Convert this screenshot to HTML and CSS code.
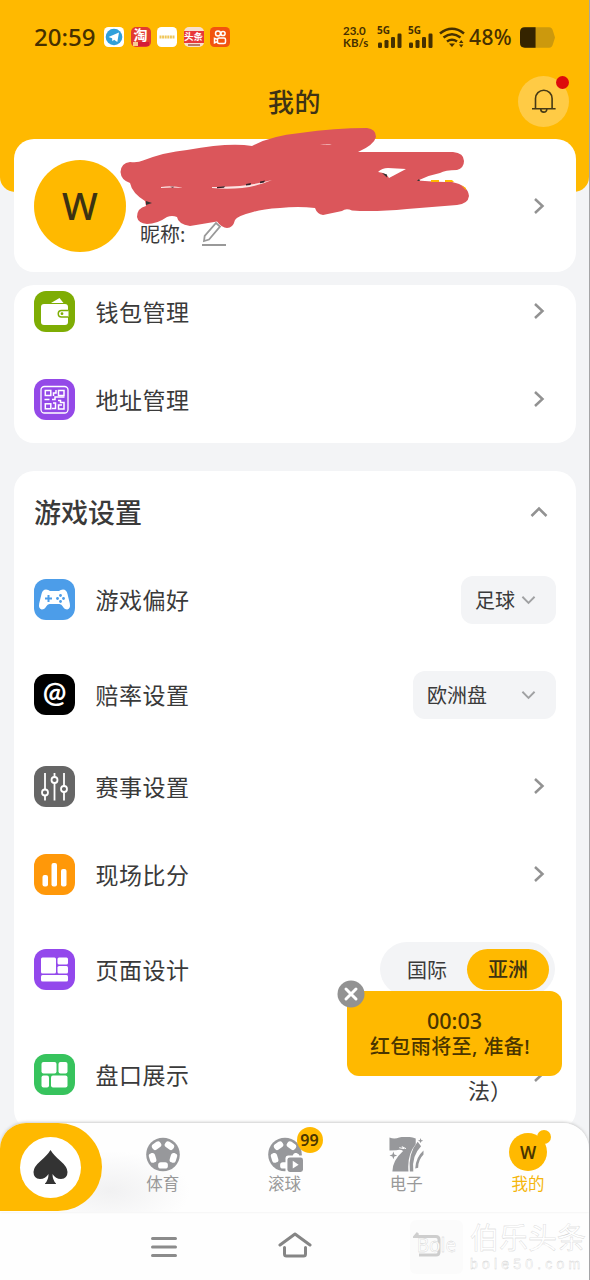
FILE: index.html
```html
<!DOCTYPE html>
<html lang="zh-CN">
<head>
<meta charset="utf-8">
<title>我的</title>
<link rel="stylesheet" href="styles.css">
</head>
<body>
<svg class="defs" width="0" height="0">
  <symbol id="chev" viewBox="0 0 12 18"><path d="M2 2l7.500 7L2 16" fill="none" stroke="#929292" stroke-width="2.500"/></symbol>
  <symbol id="down" viewBox="0 0 16 10"><path d="M1.500 1.500L8 8l6.500-6.500" fill="none" stroke="#a0a1a3" stroke-width="2"/></symbol>
  <symbol id="signal" viewBox="0 0 26 22"><g fill="#463000"><rect x="2" y="16.500" width="4" height="5.500" rx="1.200"/><rect x="8.500" y="14" width="4" height="8" rx="1.200"/><rect x="15" y="11" width="4" height="11" rx="1.200"/><rect x="21.500" y="7.500" width="4" height="14.500" rx="1.200"/></g></symbol>
  <symbol id="ball" viewBox="0 0 36 36"><circle cx="18" cy="18" r="17.300" fill="#97989b"/><g fill="#fff"><rect x="13" y="26" width="10" height="6.500" rx="2.800"/><rect x="13" y="26" width="10" height="6.500" rx="2.800" transform="rotate(72 18 18)"/><rect x="13" y="26" width="10" height="6.500" rx="2.800" transform="rotate(144 18 18)"/><rect x="13" y="26" width="10" height="6.500" rx="2.800" transform="rotate(216 18 18)"/><rect x="13" y="26" width="10" height="6.500" rx="2.800" transform="rotate(288 18 18)"/></g></symbol>
</svg>
<div class="app">
  <header class="header">
    <div class="status">
      <span class="clock">20:59</span>
      <div class="apps">
        <svg viewBox="0 0 20 20"><rect width="20" height="20" rx="4.500" fill="#fff"/><circle cx="10" cy="10" r="8.300" fill="#31a0da"/><path d="M4.500 10L15 5.500 13.300 15l-3.200-2.300-1.700 1.600-.3-3z" fill="#fff"/></svg>
        <span class="app-icon taobao"><b>淘</b><i></i></span>
        <svg viewBox="0 0 20 20"><rect width="20" height="20" rx="4.500" fill="#fff"/><path d="M2.500 10h15" stroke="#efc65a" stroke-width="3" stroke-dasharray="2 .6"/></svg>
        <span class="app-icon toutiao"><b>头条</b><i></i></span>
        <svg viewBox="0 0 20 20"><rect width="20" height="20" rx="4.500" fill="#f2530f"/><g fill="none" stroke="#fff" stroke-width="1.500"><circle cx="8" cy="6.500" r="2.500"/><circle cx="13" cy="6.500" r="2.100"/><rect x="7.500" y="11" width="8" height="5.500" rx="1.500"/><path d="M7 12.300l-2.500-1v4.500l2.500-1"/></g></svg>
      </div>
      <div class="speed"><span>23.0</span><span>KB/s</span></div>
      <div class="cell"><svg><use href="#signal"/></svg><b>5G</b></div>
      <div class="cell second"><svg><use href="#signal"/></svg><b>5G</b></div>
      <svg class="wifi" viewBox="0 0 26 21"><g fill="none" stroke="#463000" stroke-width="2.600"><path d="M1 6.500Q13-3 25 6.500M4.500 10.500q8.500-6.500 17 0M8 14.500q5-3.500 10 0"/></g><path d="M10 16.500h6L13 20z" fill="#463000"/><path d="M20 16l2.200-3 2.200 3zm0 1.500h4.400L22.200 20.500z" fill="#463000"/></svg>
      <span class="percent">48%</span>
      <svg class="battery" viewBox="0 0 36 21"><path d="M5 0h25q3 0 4 4l2 6.500-2 6.500q-1 4-4 4H5q-5 0-5-5V5q0-5 5-5z" fill="#cc990d"/><path d="M16 0H5Q0 0 0 5v11q0 5 5 5h11z" fill="#352400"/></svg>
    </div>
    <div class="titlebar">
      <h1>我的</h1>
      <div class="bell">
        <svg viewBox="0 0 26 26"><path d="M4.500 20.500V10.500a8.300 8.300 0 0 1 16.600 0v10M1 20.700h23.600M9.800 21.500a3 2.600 0 0 0 6 0" fill="none" stroke="#463a16" stroke-width="1.600"/></svg>
        <i></i>
      </div>
    </div>
  </header>

  <section class="card profile">
    <div class="avatar">W</div>
    <div class="nick"><span>昵称:</span>
      <svg viewBox="0 0 25 24"><path d="M3 19l.7-5L15 1l4 3.500L8 17.500zM1 23h24" fill="none" stroke="#999" stroke-width="1.800"/></svg>
    </div>
    <svg class="chev"><use href="#chev"/></svg>
    <svg class="scribble" viewBox="115 125 360 108">
      <path d="M120.500 172Q121 163 130 162Q138 163 143 160.500Q165 152 187 150Q230 142 252 146Q270 136 300 133Q335 128 367 128Q376 129 376 137Q374 145 358 152H453Q464 153 464 161Q464 168 457 170Q445 170 440 173Q429 175 418 180.500Q440 182 452 182Q468 185 469 196Q468 204 457 205L407 209Q375 212 352 210.500Q346 208 342 211L323 215Q317 214 315 208Q298 206 280 208Q262 209 253 212Q237 216 235 220Q233 228 227 228Q222 228 217 221.500L190 226Q178 224 177 217Q172 215 167 217Q157 224 147 224Q138 223 137 217Q137 208 146 206L145 201Q132 193 130 183Q121 180 120.500 172Z" fill="#db565b"/>
      <path d="M378 172Q382 168 388 168L406 169 389 178Q387 173 378 172Z" fill="#fff"/>
      <path d="M382 173l5 1.500v3M417 181l2-2 1 2M146 201l6 2-6 2z" fill="#333"/>
      <path d="M431 180h8v2h-8zM445 180h7l2 2h-9zM461 185l5 3v2" fill="#ffb900"/>
      <path d="M212 187q30 1 60-7-24 11-60 8zM161 187q12-2 22 1-11-1-22 0zM320 145q7-2 12 0-7-1-12 0z" fill="#fce4e4"/>
      <path d="M217 187l8-.8-1 1.500-7 .5zm29-3l5-1-.5 2-4.500.6zm14-2.500l5-1-1 2-4 .7zm-90 5.300h4l-1 1z" fill="#32232a"/>
    </svg>
  </section>

  <section class="card wallet">
    <div class="row h-link">
      <svg class="ico" viewBox="0 0 41 41"><rect width="41" height="41" rx="12" fill="#7ead04"/><path d="M17 12l8.500-5 4 5z" fill="#fff"/><rect x="7" y="13" width="27" height="21" rx="3" fill="#fff"/><path d="M34.500 19.500H27.500a3 3 0 0 0 0 6.500h7" fill="#fff" stroke="#7ead04" stroke-width="1.500"/><circle cx="28" cy="22.700" r="1.400" fill="#7ead04"/></svg>
      <span class="label">钱包管理</span><svg class="chev"><use href="#chev"/></svg>
    </div>
    <div class="row h-link">
      <svg class="ico" viewBox="0 0 41 41"><rect width="41" height="41" rx="12" fill="#9449e8"/><g fill="none" stroke="#fff" stroke-width="1.300"><rect x="7" y="7.500" width="27" height="26.500" rx="3.500"/><g stroke-width="1.500"><rect x="11.300" y="11.500" width="5.500" height="5"/><rect x="24.500" y="11.500" width="5.500" height="5"/><rect x="11.300" y="24.800" width="5.500" height="5"/><path d="M22 11v3h-2.500v3M10.500 20.500h5M18 20.500h3v-2.500h9.500M19 24h2.500v5.500H18M24 21.500h2.500v2H30v6.500h-5.500v-4H28"/></g></g></svg>
      <span class="label">地址管理</span><svg class="chev"><use href="#chev"/></svg>
    </div>
  </section>

  <section class="card settings">
    <div class="head"><h2>游戏设置</h2><svg viewBox="0 0 18 12"><path d="M1.500 10L9 2.500l7.500 7.500" fill="none" stroke="#929292" stroke-width="2.500"/></svg></div>
    <div class="row h-select">
      <svg class="ico" viewBox="0 0 41 41"><rect width="41" height="41" rx="12" fill="#4c9de9"/><path d="M12 10.500q2.500 0 4 1.500h9q1.500-1.500 4-1.500 3.500 0 4.500 4.500l2.300 9.500q1 5-2.500 6-3 0-4.500-3-1.200-2.500-3.300-2.500h-10q-2 0-3.300 2.500-1.500 3-4.500 3-3.500-1-2.500-6l2.300-9.500q1-4.500 4.500-4.500z" fill="#fff"/><path d="M14.500 16v7M11 19.500h7" stroke="#4c9de9" stroke-width="2"/><g fill="#4c9de9"><circle cx="26.500" cy="16.500" r="1.400"/><circle cx="26.500" cy="22.500" r="1.400"/><circle cx="23.500" cy="19.500" r="1.400"/><circle cx="29.500" cy="19.500" r="1.400"/></g></svg>
      <span class="label">游戏偏好</span>
      <div class="select"><span>足球</span><svg><use href="#down"/></svg></div>
    </div>
    <div class="row h-select">
      <span class="ico at">@</span>
      <span class="label">赔率设置</span>
      <div class="select wide"><span>欧洲盘</span><svg><use href="#down"/></svg></div>
    </div>
    <div class="row h-link">
      <svg class="ico" viewBox="0 0 41 41"><rect width="41" height="41" rx="12" fill="#666"/><g fill="#666" stroke="#fff" stroke-width="1.800"><path d="M11 7v27.500M20.500 7v27.500M30 7v27.500"/><circle cx="11" cy="26.500" r="3"/><circle cx="20.500" cy="14" r="3"/><circle cx="30" cy="23" r="3"/></g></svg>
      <span class="label">赛事设置</span><svg class="chev"><use href="#chev"/></svg>
    </div>
    <div class="row h-link">
      <svg class="ico" viewBox="0 0 41 41"><rect width="41" height="41" rx="12" fill="#ff9809"/><g fill="#fff"><rect x="8.500" y="21" width="5.500" height="11.500" rx="2"/><rect x="17.500" y="9" width="5.500" height="23.500" rx="2"/><rect x="27" y="15" width="5.500" height="17.500" rx="2"/></g></svg>
      <span class="label">现场比分</span><svg class="chev"><use href="#chev"/></svg>
    </div>
    <div class="row h-design">
      <svg class="ico" viewBox="0 0 41 41"><rect width="41" height="41" rx="12" fill="#9348ec"/><g fill="#fff"><rect x="7" y="8.500" width="15" height="16" rx="1.500"/><rect x="23.500" y="8.500" width="10.500" height="7" rx="1.500"/><rect x="23.500" y="17" width="10.500" height="7.500" rx="1.500"/><rect x="7" y="26" width="27" height="6.500" rx="1.500"/></g></svg>
      <span class="label">页面设计</span>
      <div class="toggle"><span>国际</span><b>亚洲</b></div>
    </div>
    <div class="row h-market">
      <svg class="ico" viewBox="0 0 41 41"><rect width="41" height="41" rx="12" fill="#37c35d"/><g fill="#fff"><rect x="7.500" y="8" width="15" height="11.500" rx="2"/><rect x="24.500" y="8" width="9" height="11.500" rx="2"/><rect x="7.500" y="21.500" width="7.500" height="12" rx="2"/><rect x="17" y="21.500" width="16.500" height="12" rx="2"/></g></svg>
      <span class="label">盘口展示</span>
      <span class="value">法）</span>
      <svg class="chev"><use href="#chev"/></svg>
    </div>
  </section>

  <nav class="tabs">
    <div class="home"><div><svg viewBox="0 0 34 34"><path d="M17 0Q20 5 27 11q7 6 7 11 0 6.500-6.500 7-5.500 0-8.500-5 0 6 3.500 9.500v.5h-11v-.5Q15 30 15 24q-3 5-8.500 5Q0 28.500 0 22q0-5 7-11Q14 5 17 0z" fill="#333"/></svg></div></div>
    <div class="tab"><svg class="tico"><use href="#ball"/></svg><span>体育</span></div>
    <div class="tab">
      <div class="tico-wrap"><svg class="tico" viewBox="0 0 36 36"><use href="#ball" width="36" height="36"/><path d="M18.500 36v-14q0-3 3-3H36v17z" fill="#fff"/><rect x="20.500" y="21" width="16" height="15" rx="2.500" fill="#97989b"/><path d="M26 24.500l6 4-6 4z" fill="#fff"/></svg><b class="badge">99</b></div>
      <span>滚球</span>
    </div>
    <div class="tab"><svg class="tico" viewBox="0 0 36 36"><g fill="#97989b"><path d="M1 .5q5 2 10 0 8-2 17 1v6Q19 18 20.500 35.500H4q0-11 11-21-2-2-7-1l-7 .5z"/><path d="M30 5q-10 12-8 30.500h3.500q-2-16 8-26zM36 14q-8 7-8.500 18.500l3-1q0-8 5.500-13.500z"/><path d="M5 15l1 3 3 1-3 1-1 3-1-3-3-1 3-1zM33 1l.7 2 2 .8-2 .7-.7 2-.7-2-2-.7 2-.8z"/></g><path d="M11 11l5 1-2-2 4 2" fill="none" stroke="#fff"/></svg><span>电子</span></div>
    <div class="tab active"><div class="me">W<i></i></div><span>我的</span></div>
  </nav>

  <div class="sysnav">
    <svg class="menu" viewBox="0 0 26 22"><path d="M1.500 2.500h23M1.500 11h23M1.500 19.500h23" stroke="#8b8b8b" stroke-width="3" stroke-linecap="round"/></svg>
    <svg class="house" viewBox="0 0 34 26"><path d="M2 13L17 2l15 11M6.500 15.500V22q0 2 2 2h17q2 0 2-2v-6.500" fill="none" stroke="#858585" stroke-width="3" stroke-linecap="round" stroke-linejoin="round"/></svg>
    <svg class="back" viewBox="0 0 28 26"><path d="M5 1L2 4.500h21q3 0 3 3V20q0 3-3 3H6" fill="none" stroke="#a9a9a9" stroke-width="3"/></svg>
  </div>

  <div class="watermark"><span class="mark">Bole</span><div><p>伯乐头条</p><small>bole50.com</small></div></div>

  <div class="popup">
    <svg viewBox="0 0 28 28"><circle cx="14" cy="14" r="13.500" fill="#929292"/><path d="M9 9l10 10M19 9L9 19" stroke="#fff" stroke-width="3" stroke-linecap="round"/></svg>
    <strong>00:03</strong>
    <p>红包雨将至, 准备!</p>
  </div>
</div>
</body>
</html>
```
FILE: styles.css
```css
* { box-sizing: border-box; margin: 0; padding: 0; }
body { background: #f3f4f6; font-family: "Noto Sans", "Noto Sans CJK SC", sans-serif; color: #3a3a3a; }
svg { display: block; flex: none; }
.defs { position: absolute; }
.app { position: relative; width: 590px; height: 1280px; overflow: hidden; border-right: 1px solid #a5a5a7; }

.header { height: 192px; background: #ffb900; border-radius: 0 0 15px 15px; }
.status { display: flex; align-items: center; height: 74px; padding-left: 34px; color: #463000; }
.clock { width: 70px; font: 500 24px/1 "Noto Sans", sans-serif; white-space: nowrap; }
.apps { display: flex; gap: 6.500px; width: 239px; }
.apps svg, .app-icon { width: 20px; height: 20px; }
.app-icon { display: flex; flex-direction: column; align-items: center; border-radius: 5px; color: #fff; font-family: "Noto Sans CJK SC", sans-serif; }
.app-icon b { line-height: 14px; height: 15px; white-space: nowrap; }
.taobao { background: #e23b31; }
.taobao b { font-size: 14px; }
.taobao i { width: 16px; height: 4px; border-left: 5px solid #f6cb91; background: #d51c38; }
.toutiao { background: #f7dfcf; }
.toutiao b { width: 20px; margin-top: 4px; height: 12px; line-height: 11px; background: #e8383a; font-size: 9.500px; text-align: center; }
.toutiao i { width: 12px; height: 2px; margin-top: 1px; background: #b77b6a; }
.speed { display: flex; flex-direction: column; width: 33px; font: 700 11.500px/12px Lato, sans-serif; white-space: nowrap; }
.cell { position: relative; width: 31px; height: 22px; }
.cell svg { width: 26px; height: 22px; }
.cell b { position: absolute; left: 1px; top: -2px; font: 700 10px/12px "Noto Sans", sans-serif; }
.second { width: 32px; }
.wifi { width: 26px; height: 21px; margin-right: 4px; }
.percent { width: 51px; font: 500 21px/1 "Noto Sans", sans-serif; letter-spacing: .4px; white-space: nowrap; }
.battery { width: 35px; height: 21px; }
.titlebar { display: flex; justify-content: center; align-items: center; height: 56px; position: relative; }
h1 { margin-top: -2px; font-size: 26px; font-weight: 500; letter-spacing: .5px; color: #3e3215; }
.bell { position: absolute; right: 20px; top: 2px; display: grid; place-items: center; width: 51px; height: 51px; border-radius: 50%; background: #ffcb45; }
.bell svg { width: 26px; height: 26px; margin-top: -2px; }
.bell i { position: absolute; right: 0; top: 0; width: 13px; height: 13px; border-radius: 50%; background: #dd0b0b; }

.card { width: 562px; margin-left: 14px; border-radius: 20px; background: #fff; }
.profile { position: relative; display: flex; align-items: center; height: 133px; margin-top: -53px; padding: 0 31px 0 20px; }
.avatar { width: 92px; height: 92px; border-radius: 50%; background: #ffb900; color: #3c3212; font: 500 38px/91px "Noto Sans", sans-serif; text-align: center; }
.nick { display: flex; align-items: flex-end; gap: 15px; align-self: flex-end; flex: 1; height: 36px; margin: 0 0 26px 14px; font-size: 20px; line-height: 26px; }
.nick span { width: 46px; white-space: nowrap; margin-bottom: -2px; }
.nick svg { width: 25px; height: 24px; }
.chev { width: 12px; height: 18px; margin-left: auto; }
.scribble { position: absolute; left: 101px; top: -14px; width: 360px; height: 108px; }

.wallet { height: 158px; margin-top: 13px; overflow: hidden; }
.wallet .row:first-child { margin-top: -18px; }
.settings { height: 659px; margin-top: 28px; }
.head { display: flex; justify-content: space-between; align-items: center; height: 81px; padding: 0 28px 0 20px; }
.head svg { width: 18px; height: 12px; }
h2 { margin-top: -1px; font-size: 27px; font-weight: 500; }
.row { display: flex; align-items: center; padding: 0 31px 0 20px; }
.h-link { height: 88px; }
.h-select { height: 95px; padding-right: 20px; }
.h-design { height: 102px; padding-right: 21px; }
.h-market { height: 108px; }
.ico { width: 41px; height: 41px; margin-right: 20.500px; }
.at { border-radius: 12px; background: #000; color: #fff; text-align: center; font: 700 28px/36px Lato, sans-serif; }
.label { margin-top: -1px; font-size: 23px; letter-spacing: .5px; }
.select { display: flex; align-items: center; justify-content: space-between; width: 95px; height: 48px; margin-left: auto; padding: 0 20px 0 14px; border-radius: 12px; background: #f3f4f6; font-size: 20px; }
.select span { margin-top: -1px; }
.select svg { width: 15px; height: 10px; }
.wide { width: 143px; }
.toggle { display: flex; align-items: center; justify-content: space-between; width: 175px; height: 54px; margin-left: auto; padding: 0 6px 0 27px; border-radius: 27px; background: #f3f4f6; font-size: 20px; }
.toggle b { width: 82px; height: 41px; border-radius: 21px; background: #ffb900; color: #3c3212; font-weight: 500; line-height: 41px; text-align: center; }
.value { margin: 30px 0 0 auto; width: 45px; font-size: 22px; white-space: nowrap; }
.h-market .chev { margin-left: 20px; }

.tabs { position: relative; display: flex; height: 89px; margin-top: -7px; border-radius: 26px 26px 0 0; background: radial-gradient(ellipse 80px 40px at 110px 68px, #f1f1f2, #fefefe); box-shadow: 0 -1px 3px #ccc; }
.home { display: grid; place-items: center; width: 102px; height: 88px; border-radius: 26px 44px 44px 0; background: #ffb900; }
.home div { display: grid; place-items: center; width: 61px; height: 61px; border-radius: 50%; background: #fff; }
.home svg { width: 35px; height: 34px; }
.tab { display: flex; flex-direction: column; align-items: center; width: 122px; padding-top: 14px; color: #999; font-size: 16.500px; }
.tab > span { line-height: 24px; }
.tico { width: 36px; height: 35px; }
.tico-wrap { position: relative; }
.badge { position: absolute; left: 30px; top: -10px; width: 26px; height: 26px; border-radius: 50%; background: #ffb900; color: #4a3500; font: 600 16px/26px "Noto Sans", sans-serif; text-align: center; }
.active { color: #f5b60c; padding-top: 10px; }
.me { position: relative; width: 38px; height: 38px; margin-bottom: 1px; border-radius: 50%; background: #ffb900; color: #4a3500; font: 600 17px/39px "Noto Sans", sans-serif; text-align: center; }
.me i { position: absolute; right: -4px; top: -3px; width: 14px; height: 14px; border-radius: 50%; background: #ffb900; }
.sysnav { display: grid; grid-template-columns: 26px 34px 28px; column-gap: 101px; align-items: center; height: 69px; padding-left: 151px; background: #fefefe; }
.menu { width: 26px; height: 22px; }
.house { width: 34px; height: 26px; margin-top: -3px; }
.back { width: 28px; height: 26px; margin-top: -3px; }

.watermark { position: absolute; left: 410px; top: 1220px; display: flex; gap: 7px; color: #fff; -webkit-text-stroke: .3px #ccc; }
.mark { width: 53px; height: 54px; border-radius: 6px; background: #f8f8f877; font-size: 19px; line-height: 50px; text-align: center; }
.watermark p { font-size: 29px; line-height: 36px; white-space: nowrap; }
.watermark small { display: block; font: 14px/17px "Liberation Sans", sans-serif; letter-spacing: 4.200px; white-space: nowrap; }

.popup { position: absolute; left: 347px; top: 991px; width: 215px; height: 85px; padding-top: 16px; border-radius: 12px; background: #ffb900; color: #4a3500; text-align: center; }
.popup svg { position: absolute; left: -10px; top: -11px; width: 28px; height: 28px; }
.popup strong { display: block; font: 500 21.500px/27px "Noto Sans", sans-serif; }
.popup p { padding-right: 9px; font-size: 20px; font-weight: 500; letter-spacing: .4px; line-height: 26px; white-space: nowrap; }
```
